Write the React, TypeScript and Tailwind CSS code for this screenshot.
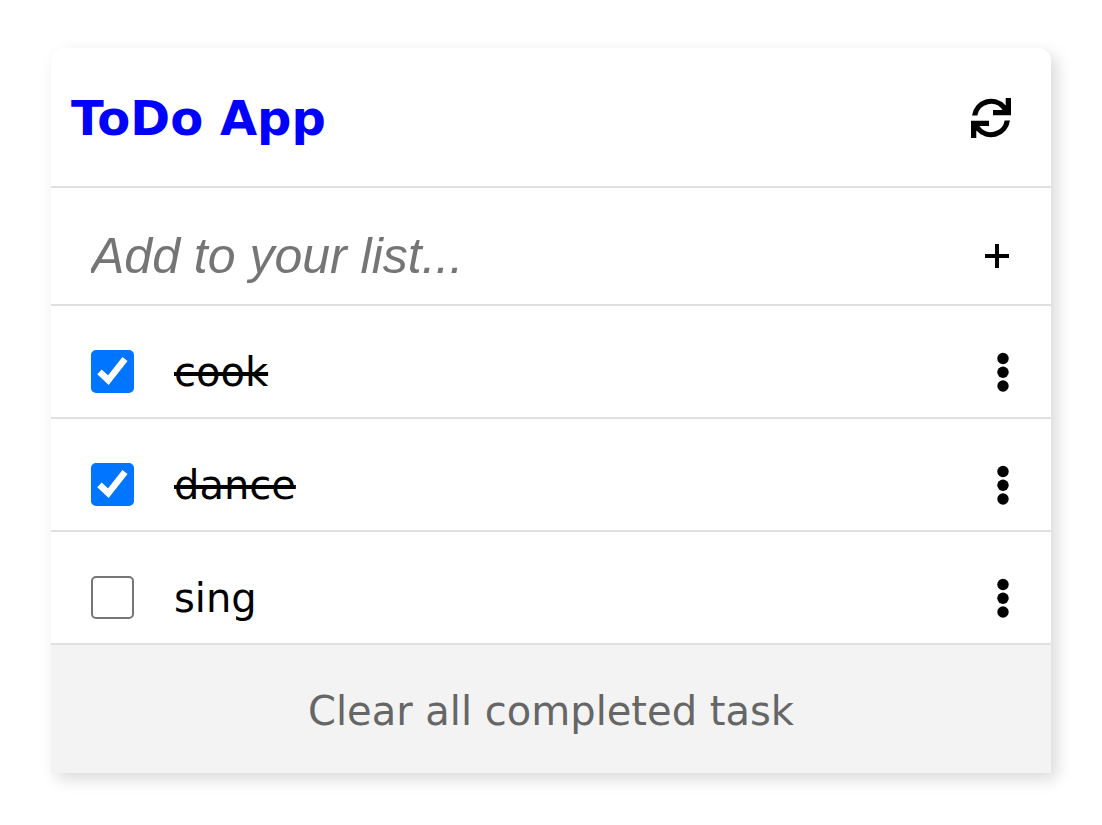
import { useState } from "react";

type Task = { id: number; title: string; done: boolean };

const initialTasks: Task[] = [
  { id: 1, title: "cook", done: true },
  { id: 2, title: "dance", done: true },
  { id: 3, title: "sing", done: false },
];

function RefreshIcon() {
  return (
    <svg viewBox="0 0 40 40" className="size-10" fill="currentColor" aria-hidden="true">
      <path d="M1 17.5A19.3 19.3 0 0 1 34.7 7.4V0H40V17.3H22V12H31.6A14 14 0 0 0 6.3 17.5Z" />
      <path d="M39 22.5A19.3 19.3 0 0 1 5.3 32.6V40H0V22.7H18V28H8.4A14 14 0 0 0 33.7 22.5Z" />
    </svg>
  );
}

function PlusIcon() {
  return (
    <svg viewBox="0 0 24 24" className="size-6" fill="currentColor" aria-hidden="true">
      <path d="M0 10H10V0H14V10H24V14H14V24H10V14H0Z" />
    </svg>
  );
}

function DotsIcon() {
  return (
    <svg viewBox="0 0 12 40" className="h-10 w-3" fill="currentColor" aria-hidden="true">
      <circle cx="6" cy="6.5" r="5.7" />
      <circle cx="6" cy="20.3" r="5.7" />
      <circle cx="6" cy="34" r="5.7" />
    </svg>
  );
}

function TaskRow({ task, onToggle }: { task: Task; onToggle: () => void }) {
  return (
    <li className="flex h-[113px] items-center justify-between border-b-2 border-[#e0e0e0] pt-5 pr-[42px] pl-10">
      <label className="flex items-center gap-10 text-[40px] leading-[48px]">
        <span className="relative flex size-[43px]">
          <input
            type="checkbox"
            checked={task.done}
            onChange={onToggle}
            className="size-full appearance-none rounded-[5px] border-2 border-[#767676] bg-white checked:border-[#0075ff] checked:bg-[#0075ff]"
          />
          {task.done && (
            <svg
              viewBox="0 0 43 43"
              className="pointer-events-none absolute inset-0 size-full"
              fill="none"
              stroke="white"
              strokeWidth="6.5"
              aria-hidden="true"
            >
              <path d="M8.5 21.8L17.3 30.2L34 9" />
            </svg>
          )}
        </span>
        <span className={task.done ? "line-through decoration-4" : ""}>{task.title}</span>
      </label>
      <button type="button" aria-label={`Options for ${task.title}`}>
        <DotsIcon />
      </button>
    </li>
  );
}

export default function App() {
  const [tasks, setTasks] = useState(initialTasks);
  const [draft, setDraft] = useState("");

  const toggle = (id: number) =>
    setTasks(tasks.map((t) => (t.id === id ? { ...t, done: !t.done } : t)));

  const add = () => {
    if (!draft.trim()) return;
    setTasks([...tasks, { id: Date.now(), title: draft.trim(), done: false }]);
    setDraft("");
  };

  return (
    <main className="bg-white px-[51px] py-12 font-[Verdana,'DejaVu_Sans',sans-serif] text-black">
      <section className="rounded-t-[13px] shadow-[6px_6px_16px_rgba(0,0,0,0.15)]">
        <header className="flex h-[140px] items-center justify-between border-b-2 border-[#e0e0e0] pt-0.5 pr-10 pl-5">
          <h1 className="text-[48px] leading-[56px] font-bold text-[#0000ff]">ToDo App</h1>
          <button type="button" aria-label="Refresh" onClick={() => setTasks(initialTasks)}>
            <RefreshIcon />
          </button>
        </header>
        <form
          className="flex h-[118px] items-center justify-between border-b-2 border-[#e0e0e0] pt-5 pr-[42px] pl-10"
          onSubmit={(e) => {
            e.preventDefault();
            add();
          }}
        >
          <input
            type="text"
            aria-label="New task"
            placeholder="Add to your list..."
            value={draft}
            onChange={(e) => setDraft(e.target.value)}
            className="min-w-0 grow font-[Arial,'Liberation_Sans',sans-serif] text-[50px] leading-[58px] italic outline-none placeholder:text-[#757575]"
          />
          <button type="submit" aria-label="Add">
            <PlusIcon />
          </button>
        </form>
        <ul>
          {tasks.map((task) => (
            <TaskRow key={task.id} task={task} onToggle={() => toggle(task.id)} />
          ))}
        </ul>
        <button
          type="button"
          onClick={() => setTasks(tasks.filter((t) => !t.done))}
          className="block h-32 w-full bg-[#f3f3f3] pt-1 text-[40px] leading-[48px] text-[#666666]"
        >
          Clear all completed task
        </button>
      </section>
    </main>
  );
}
